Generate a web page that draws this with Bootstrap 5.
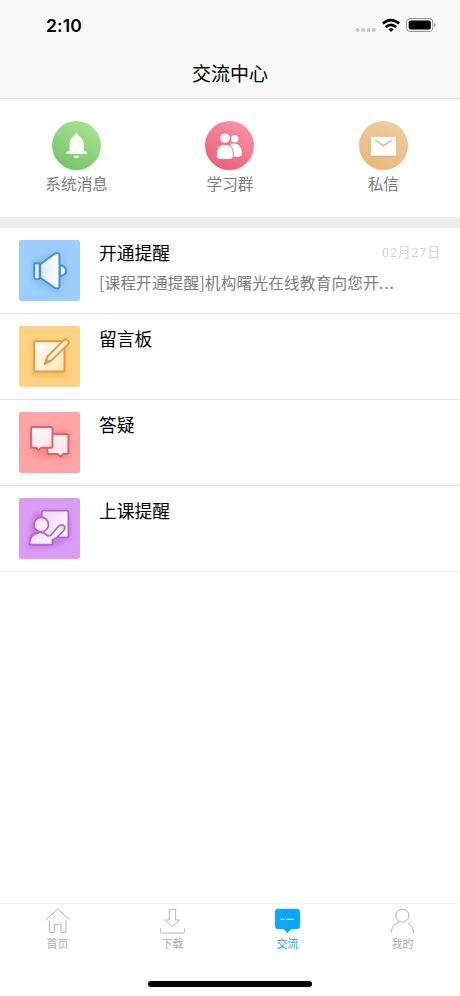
<!DOCTYPE html>
<html lang="zh-CN">
<head>
<meta charset="utf-8">
<meta name="viewport" content="width=device-width, initial-scale=1">
<title>交流中心</title>
<link href="https://cdn.jsdelivr.net/npm/bootstrap@5.3.0/dist/css/bootstrap.min.css" rel="stylesheet">
<style>
body{font-family:"Liberation Sans","Noto Sans CJK SC",sans-serif;background:#fff;color:#000}
svg{display:block;flex:none}
.screen{width:460px;height:996px}
.topbar{height:99px;background:#f9f9f9;border-bottom:1px solid #e0e0e0}
.status{height:52px;padding:0 24px 0 46px}
.clock{font:600 17.5px/1 Inter,sans-serif;letter-spacing:.1px}
.page-title{font-size:19px;line-height:28px;padding-top:9px;font-weight:400}
.shortcuts{height:118px;padding-top:21.6px}
.shortcuts span{font-size:15.7px;line-height:20px;color:#7c7c7c;margin-top:5.4px}
.divider{height:11px;background:#ededee}
.msg{height:86px;padding:12px 19px 0;border-bottom:1px solid #e2e2e3}
.msg:last-child{border-bottom-color:#efefef}
.msg-body{margin-left:19px;padding-top:1px}
.msg h2{font-size:17.8px;line-height:26px;font-weight:400}
.msg p{font-family:"Noto Sans CJK SC",sans-serif;font-size:15.7px;line-height:24px;letter-spacing:.14px;color:#7c7c7c;padding-top:4px}
.dots{letter-spacing:.9px}
.tile{border-radius:2px}
.date{font-family:Roboto,"Noto Sans CJK SC",sans-serif;font-size:13.2px;line-height:24px;color:#d3d3d3;letter-spacing:.55px}
.tabs{height:74px;border-top:1px solid #f4f4f4;padding-top:4px}
.tabs a{color:#adadad;font-size:11px;line-height:16px}
.tabs a.active{color:#0aa5fa}
.tabs svg{margin-bottom:2px}
.home-bar{width:164px;height:5.5px;background:#000;margin:4px auto 9.5px}
</style>
</head>
<body>
<div class="screen d-flex flex-column overflow-hidden">
<header class="topbar flex-shrink-0">
  <div class="status d-flex align-items-center justify-content-between">
    <span class="clock">2:10</span>
    <svg width="82" height="18" viewBox="0 0 82 18">
      <g fill="#c7c7c7"><circle cx="3.5" cy="13" r="2.1"/><circle cx="9" cy="13" r="2.1"/><circle cx="14.3" cy="13" r="2.1"/><circle cx="19.8" cy="13" r="2.1"/></g>
      <g fill="none" stroke="#000" stroke-width="2.6"><path d="M28.8 6.6Q37 -.4 45.2 6.6"/><path d="M31.8 10Q37 5.6 42.2 10"/></g>
      <path d="M34.3 12.3Q37 10.2 39.7 12.3L37 15Z"/>
      <rect x="52.6" y="1.6" width="26.2" height="12.8" rx="3.7" fill="#fff" stroke="#9a9a9a" stroke-width="1.1"/>
      <rect x="54.6" y="3.6" width="22.2" height="8.8" rx="2"/>
      <path d="M80.2 6.2q1.5.3 1.5 1.9t-1.5 1.9z" fill="#999"/>
    </svg>
  </div>
  <h1 class="page-title text-center m-0">交流中心</h1>
</header>

<section class="shortcuts row g-0 text-center flex-shrink-0">
  <div class="col d-flex flex-column align-items-center">
    <svg width="49" height="49" viewBox="67 30 147 147"><defs><linearGradient id="green" x1=".8" y1="0" x2=".3" y2="1"><stop stop-color="#a7e592"/><stop offset="1" stop-color="#74c468"/></linearGradient></defs>
      <circle cx="140.500" cy="103.500" r="73.500" fill="url(#green)"/>
      <path fill="#fff" d="M140 67q6 0 7 8q15 7 15 24V119L172 123V129H110V123L120 119V99q0-17 14-24q0-8 6-8ZM131 134H149Q147 142 140 142Q133 142 131 134Z"/></svg>
    <span>系统消息</span>
  </div>
  <div class="col d-flex flex-column align-items-center">
    <svg width="49" height="49" viewBox="78 30 147 147"><defs><linearGradient id="red" x1=".8" y1="0" x2=".3" y2="1"><stop stop-color="#fa94a3"/><stop offset="1" stop-color="#eb5e7c"/></linearGradient></defs>
      <circle cx="151.500" cy="103.500" r="73.500" fill="url(#red)"/>
      <g fill="#fff"><circle cx="167" cy="83" r="11"/><path d="M155 99Q187 92 189 127Q189 136 180 137H160Z"/></g>
      <g fill="#fff" stroke="#ef6e87" stroke-width="3"><circle cx="138" cy="81" r="16"/><path d="M112 137Q110 100 138 100Q166 100 163 137Q162 144 154 145H121Q113 144 112 137Z"/></g></svg>
    <span>学习群</span>
  </div>
  <div class="col d-flex flex-column align-items-center">
    <svg width="49" height="49" viewBox="87 30 147 147"><defs><linearGradient id="sand" x1=".8" y1="0" x2=".3" y2="1"><stop stop-color="#f0cda0"/><stop offset="1" stop-color="#e6b878"/></linearGradient></defs>
      <circle cx="160.500" cy="103.500" r="73.500" fill="url(#sand)"/>
      <path d="M122 132H199V139H125Z" fill="#dba969" opacity=".55"/>
      <path d="M123 78H198V134H123Z" fill="#fff"/><path d="M135 87L160 104L186 87" fill="none" stroke="#e3b574" stroke-width="4"/></svg>
    <span>私信</span>
  </div>
</section>
<div class="divider flex-shrink-0"></div>

<main class="flex-grow-1">
  <article class="msg d-flex">
    <svg class="tile" width="61" height="61" viewBox="56 45 184 184"><defs><linearGradient id="b1"><stop stop-color="#d9ecff"/><stop offset="1" stop-color="#fff"/></linearGradient><filter id="soft" x="-50%" y="-50%" width="200%" height="200%"><feGaussianBlur stdDeviation="8"/></filter></defs>
      <path fill="#9bcdfd" d="M56 45h184v184H56z"/><path d="M98 112L175 78L200 140L175 205L100 174Z" fill="#6eacea" opacity=".5" filter="url(#soft)"/>
      <g fill="url(#b1)" stroke="#4a90cf" stroke-width="6" stroke-linejoin="round"><path d="M179 121Q198 123 198 138Q198 152 179 154Z"/><path d="M120 118L164 86Q178 80 178 92V184Q177 195 164 189L120 159Z"/><rect x="102" y="115" width="16" height="48" rx="4"/></g></svg>
    <div class="msg-body flex-grow-1 text-nowrap">
      <div class="d-flex justify-content-between"><h2 class="m-0">开通提醒</h2><span class="date">02月27日</span></div>
      <p class="m-0">[课程开通提醒]机构曙光在线教育向您开<span class="dots">...</span></p>
    </div>
  </article>
  <article class="msg d-flex">
    <svg class="tile" width="61" height="61" viewBox="27 24 184 184"><defs><linearGradient id="b2" x2="1" y2="1"><stop stop-color="#fff"/><stop offset="1" stop-color="#ffe5b8"/></linearGradient></defs>
      <path fill="#fed282" d="M27 24h184v184H27z"/><path d="M66 72H169V176H66Z" fill="#eca84e" opacity=".5" filter="url(#soft)"/>
      <g stroke="#e19b45" stroke-width="6" stroke-linejoin="round"><rect x="73" y="70" width="91" height="91" rx="3" fill="url(#b2)"/><path fill="#fff5df" d="M104 139L113 116L161 68Q169 61 175 68Q180 74 173 81L126 127Z"/></g><path d="M103 140L110 121L123 132Z" fill="#e19b45"/></svg>
    <div class="msg-body"><h2 class="m-0">留言板</h2></div>
  </article>
  <article class="msg d-flex">
    <svg class="tile" width="61" height="61" viewBox="27 24 184 184"><defs><linearGradient id="b3" x2="1" y2="1"><stop stop-color="#fff"/><stop offset="1" stop-color="#ffdcdf"/></linearGradient></defs>
      <path fill="#fea3a4" d="M27 24h184v184H27z"/><path d="M60 78H178V164H100L60 142Z" fill="#e76d78" opacity=".45" filter="url(#soft)"/>
      <g fill="url(#b3)" stroke="#d5656f" stroke-width="6" stroke-linejoin="round"><path d="M118 91H171Q176 91 176 96V146Q176 151 171 151H160L152 159L144 151H118Q113 151 113 146V96Q113 91 118 91Z"/><path d="M69 69H123Q128 69 128 74V127Q128 132 123 132H94L86 139L78 132H69Q64 132 64 127V74Q64 69 69 69Z"/></g></svg>
    <div class="msg-body"><h2 class="m-0">答疑</h2></div>
  </article>
  <article class="msg d-flex">
    <svg class="tile" width="61" height="61" viewBox="27 24 184 184"><defs><linearGradient id="b4" x2="1" y2="1"><stop stop-color="#ecd5fb"/><stop offset="1" stop-color="#fff"/></linearGradient></defs>
      <path fill="#db9bf4" d="M27 24h184v184H27z"/><path d="M70 70H180V149L128 173H54Z" fill="#b65bd9" opacity=".5" filter="url(#soft)"/>
      <g fill="url(#b4)" stroke="#b565d2" stroke-width="5.500" stroke-linejoin="round"><rect x="96" y="62" width="80" height="81" rx="4"/><path d="M58 165Q59 132 87 128Q102 126 114 138L122 137L146 110Q155 101 163 108Q168 115 161 123L139 145L128 150V165Z"/><circle cx="94" cy="104" r="22"/></g></svg>
    <div class="msg-body"><h2 class="m-0">上课提醒</h2></div>
  </article>
</main>

<nav class="tabs row g-0 text-center flex-shrink-0">
  <a class="col d-flex flex-column align-items-center text-decoration-none" href="#"><svg width="25" height="26" viewBox="135 39 75 78" fill="none" stroke="#b3b3b3" stroke-width="3"><path d="M137 75L173 42L209 75M148 76V112H163V88H183V112H198V76"/></svg>首页</a>
  <a class="col d-flex flex-column align-items-center text-decoration-none" href="#"><svg width="25" height="26" viewBox="480 39 75 78" fill="none" stroke="#b3b3b3" stroke-width="3"><path d="M508 43H527V75H539L517 96L496 75H508ZM482 100V109Q482 114 487 114H549Q554 114 554 109V100"/></svg>下载</a>
  <a class="col d-flex flex-column align-items-center text-decoration-none active" href="#"><svg width="25" height="26" viewBox="135 39 75 78"><path fill="#0aa7ff" d="M145 41H200Q210 41 210 51V92Q210 102 200 102H184L172 115L161 102H145Q135 102 135 92V51Q135 41 145 41Z"/><path d="M152 73H163M168 73H192" stroke="#fff" stroke-width="3"/></svg>交流</a>
  <a class="col d-flex flex-column align-items-center text-decoration-none" href="#"><svg width="25" height="26" viewBox="480 39 75 78" fill="none" stroke="#b3b3b3" stroke-width="3"><circle cx="517" cy="62" r="19.500"/><path d="M484 113Q484 90 507 81M534 85Q551 95 551 113"/></svg>我的</a>
</nav>
<div class="home-bar rounded-pill flex-shrink-0"></div>
</div>
<script src="https://cdn.jsdelivr.net/npm/bootstrap@5.3.0/dist/js/bootstrap.bundle.min.js"></script>
</body>
</html>
